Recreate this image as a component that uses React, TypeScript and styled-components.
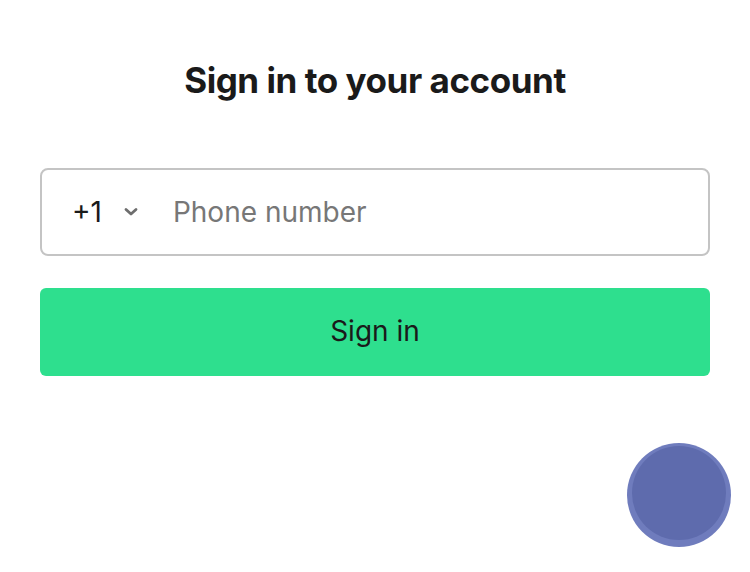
import React, { useState } from 'react'
import styled, { createGlobalStyle } from 'styled-components'

const GlobalStyle = createGlobalStyle`
  html, body {
    margin: 0;
    padding: 0;
    background: #ffffff;
  }
  body {
    font-family: Inter, "Liberation Sans", sans-serif;
    color: #1a1a1a;
  }
`

const Page = styled.div`
  position: relative;
  width: 750px;
  height: 572px;
  padding: 56px 40px 0;
  box-sizing: border-box;
  display: flex;
  flex-direction: column;
  overflow: hidden;
`

const Title = styled.h1`
  margin: 0;
  text-align: center;
  font-size: 35px;
  font-weight: 700;
  letter-spacing: -0.45px;
  line-height: 48px;
  color: #1a1a1a;
`

const Form = styled.form`
  margin-top: 64px;
  display: flex;
  flex-direction: column;
  gap: 32px;
`

const PhoneField = styled.div`
  height: 88px;
  border: 2px solid #c4c4c4;
  border-radius: 8px;
  box-sizing: border-box;
  display: flex;
  align-items: center;
  padding: 0 30px;
`

const CountryCode = styled.button`
  display: flex;
  align-items: center;
  gap: 21px;
  border: 0;
  background: transparent;
  padding: 0;
  font-family: inherit;
  font-size: 28px;
  color: #1a1a1a;
  cursor: pointer;
`

const PhoneInput = styled.input`
  flex: 1;
  border: 0;
  outline: none;
  margin-left: 34px;
  padding: 0;
  font-family: inherit;
  font-size: 28px;
  color: #1a1a1a;
  background: transparent;
  &::placeholder {
    color: #777777;
  }
`

const SubmitButton = styled.button`
  height: 88px;
  border: 0;
  border-radius: 6px;
  background: #2edf8e;
  font-family: inherit;
  font-size: 28px;
  color: #1a1a1a;
  padding-bottom: 4px;
  cursor: pointer;
`

const Bubble = styled.div`
  position: absolute;
  left: 627px;
  top: 443px;
  width: 104px;
  height: 104px;
  border-radius: 50%;
  background: #6f7cbd;
  display: flex;
  align-items: center;
  justify-content: center;
  &::after {
    content: '';
    width: 94px;
    height: 94px;
    border-radius: 50%;
    background: #5e6bad;
    margin: -4px 0 0 0;
  }
`

const Chevron = () => (
  <svg width="16" height="10" viewBox="0 0 16 10">
    <path d="M3 2.5 L8 7 L13 2.5" fill="none" stroke="#6e6e6e" strokeWidth="2.8" strokeLinecap="round" strokeLinejoin="round" />
  </svg>
)

export default function App() {
  const [phone, setPhone] = useState('')
  return (
    <>
      <GlobalStyle />
      <Page>
        <Title>Sign in to your account</Title>
        <Form onSubmit={(e) => e.preventDefault()}>
          <PhoneField>
            <CountryCode type="button">
              +1 <Chevron />
            </CountryCode>
            <PhoneInput
              placeholder="Phone number"
              value={phone}
              onChange={(e) => setPhone(e.target.value)}
            />
          </PhoneField>
          <SubmitButton type="submit">Sign in</SubmitButton>
        </Form>
        <Bubble />
      </Page>
    </>
  )
}
